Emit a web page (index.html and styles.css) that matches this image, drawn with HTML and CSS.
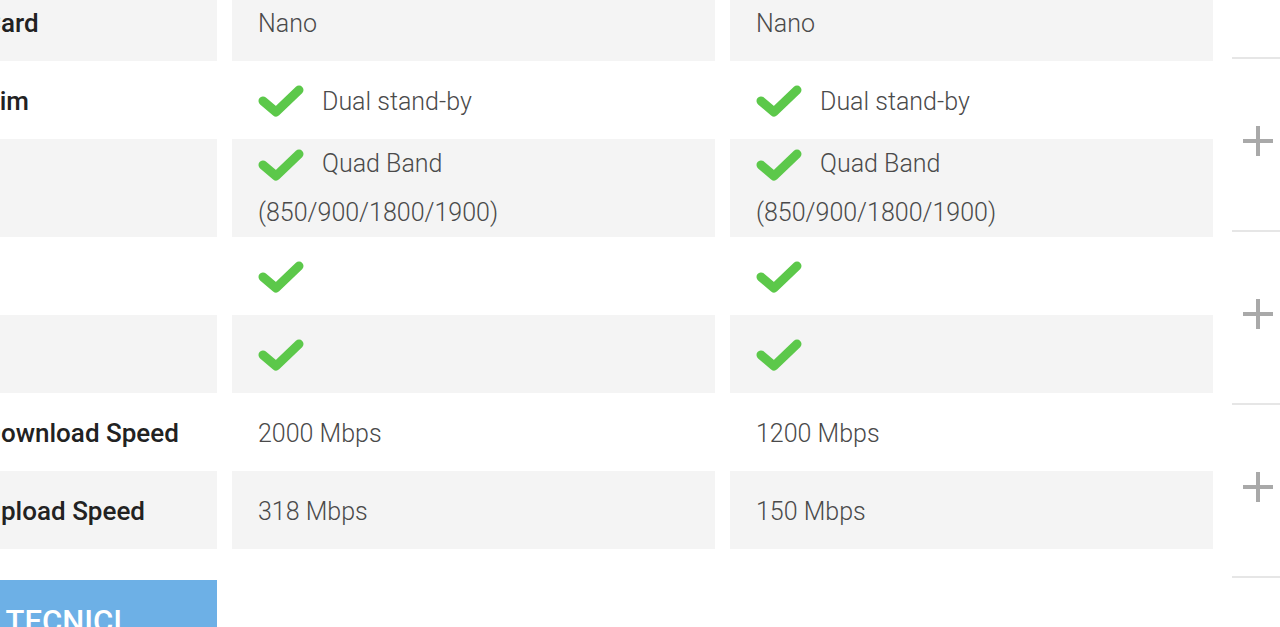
FILE: index.html
```html
<!DOCTYPE html>
<html lang="it">
<head>
<meta charset="utf-8">
<title>Confronto</title>
<link rel="stylesheet" href="styles.css">
</head>
<body>
<div class="page">
  <div class="main">
    <div class="specs">
      <div class="cell label gray">Card</div>
      <div class="cell gray">Nano</div>
      <div class="cell gray">Nano</div>

      <div class="cell label">Sim</div>
      <div class="cell"><span class="check"><svg viewBox="0 0 46 34" width="46" height="34"><polyline points="5,17 18,28 41,6" /></svg></span>Dual stand-by</div>
      <div class="cell"><span class="check"><svg viewBox="0 0 46 34" width="46" height="34"><polyline points="5,17 18,28 41,6" /></svg></span>Dual stand-by</div>

      <div class="cell label gray"></div>
      <div class="cell gray multi"><div><span class="check"><svg viewBox="0 0 46 34" width="46" height="34"><polyline points="5,17 18,28 41,6" /></svg></span>Quad Band<br>(850/900/1800/1900)</div></div>
      <div class="cell gray multi"><div><span class="check"><svg viewBox="0 0 46 34" width="46" height="34"><polyline points="5,17 18,28 41,6" /></svg></span>Quad Band<br>(850/900/1800/1900)</div></div>

      <div class="cell label"></div>
      <div class="cell"><span class="check"><svg viewBox="0 0 46 34" width="46" height="34"><polyline points="5,17 18,28 41,6" /></svg></span></div>
      <div class="cell"><span class="check"><svg viewBox="0 0 46 34" width="46" height="34"><polyline points="5,17 18,28 41,6" /></svg></span></div>

      <div class="cell label gray"></div>
      <div class="cell gray"><span class="check"><svg viewBox="0 0 46 34" width="46" height="34"><polyline points="5,17 18,28 41,6" /></svg></span></div>
      <div class="cell gray"><span class="check"><svg viewBox="0 0 46 34" width="46" height="34"><polyline points="5,17 18,28 41,6" /></svg></span></div>

      <div class="cell label">Download Speed</div>
      <div class="cell">2000 Mbps</div>
      <div class="cell">1200 Mbps</div>

      <div class="cell label gray">Upload Speed</div>
      <div class="cell gray">318 Mbps</div>
      <div class="cell gray">150 Mbps</div>
    </div>
    <div class="actions">
      <a class="btn" href="#">DATI TECNICI</a>
    </div>
  </div>
  <div class="side">
    <div class="acc"><span class="plus"></span></div>
    <div class="acc"><span class="plus"></span></div>
    <div class="acc"><span class="plus"></span></div>
    <div class="acc"><span class="plus"></span></div>
    <div class="acc"><span class="plus"></span></div>
  </div>
</div>
</body>
</html>
```

FILE: styles.css
```css
html, body {
  margin: 0;
  padding: 0;
  background: #fff;
  overflow: hidden;
}
body {
  font-family: Roboto, "Liberation Sans", sans-serif;
  width: 1280px;
  height: 627px;
}
.page {
  display: flex;
  margin-left: -40px;
  margin-top: -17px;
}
.main {
  flex: none;
  width: 1253px;
}
.specs {
  display: grid;
  grid-template-columns: 257px 483px 483px;
  column-gap: 15px;
}
.cell {
  display: flex;
  align-items: center;
  min-height: 78px;
  box-sizing: border-box;
  padding: 2px 25px 0 26px;
  font-size: 25px;
  line-height: 49px;
  color: #4a4a4a;
  font-weight: 300;
}
.cell.multi {
  padding-top: 0;
}
.cell.gray {
  background: #f4f4f4;
}
.cell.label {
  padding-left: 24px;
  color: #222;
  font-size: 26px;
  font-weight: 500;
  white-space: nowrap;
  overflow: hidden;
}
.check {
  display: inline-flex;
  align-items: center;
  margin-right: 18px;
  vertical-align: middle;
}
.check svg {
  display: block;
}
.check polyline {
  fill: none;
  stroke: #5cc84a;
  stroke-width: 9;
  stroke-linecap: round;
  stroke-linejoin: round;
}
.actions {
  margin-top: 31px;
}
.btn {
  display: block;
  width: 257px;
  box-sizing: border-box;
  padding: 24px 95px 24px 20px;
  background: #6db0e6;
  color: #fff;
  text-decoration: none;
  text-align: right;
  font-size: 31px;
  font-weight: 500;
  line-height: 36px;
  white-space: nowrap;
  overflow: hidden;
  direction: rtl;
}
.side {
  flex: none;
  width: 100px;
  margin-left: 19px;
  margin-top: -97px;
}
.acc {
  height: 171px;
  border-bottom: 2px solid #e6e6e6;
  display: flex;
  align-items: center;
}
.plus {
  position: relative;
  display: block;
  width: 30px;
  height: 30px;
  margin-left: 11px;
  margin-top: -8px;
}
.plus::before,
.plus::after {
  content: "";
  position: absolute;
  background: #a9a9a9;
}
.plus::before {
  left: 0;
  top: 13px;
  width: 30px;
  height: 4px;
}
.plus::after {
  left: 13px;
  top: 0;
  width: 4px;
  height: 30px;
}
```
